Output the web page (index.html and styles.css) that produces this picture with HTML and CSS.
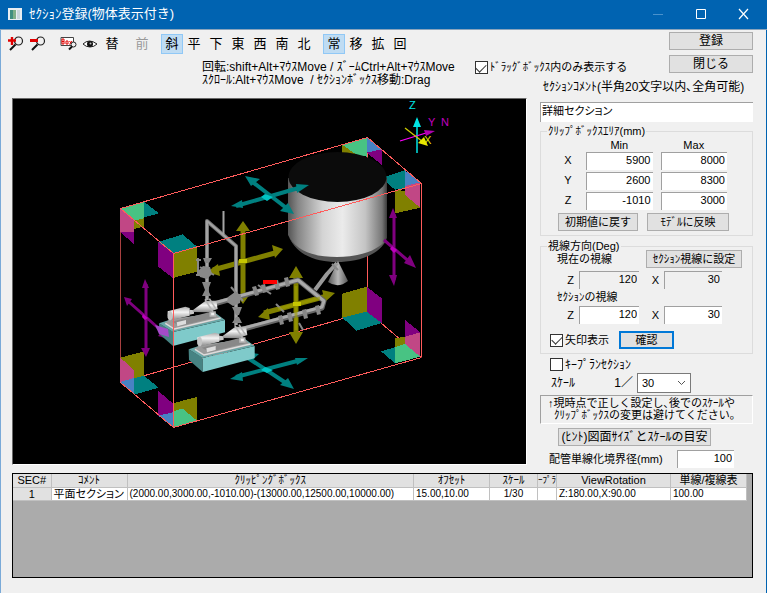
FILE: index.html
```html
<!DOCTYPE html>
<html lang="ja">
<head>
<meta charset="utf-8">
<title>ｾｸｼｮﾝ登録(物体表示付き)</title>
<link rel="stylesheet" href="styles.css">
</head>
<body>
<div class="window">
  <header class="titlebar">
    <svg class="app-icon" width="14" height="12" viewBox="0 0 14 12"><rect width="14" height="12" fill="#e8eef2"/><rect x="2" y="2" width="6" height="9" fill="#3f8f80"/><rect x="5" y="2" width="3" height="9" fill="#7fb08a"/><rect x="9" y="2" width="3" height="9" fill="#c9d6dc"/></svg>
    <h1>ｾｸｼｮﾝ登録(物体表示付き)</h1>
    <div class="window-controls">
      <button type="button" aria-label="最小化" disabled><svg width="12" height="12" viewBox="0 0 12 12"><path d="M1 6.500h10" stroke="#4a92cc"/></svg></button>
      <button type="button" aria-label="最大化"><svg width="12" height="12" viewBox="0 0 12 12"><path d="M1.500 1.500h9v9h-9z" fill="none" stroke="#fff"/></svg></button>
      <button type="button" aria-label="閉じる"><svg width="12" height="12" viewBox="0 0 12 12"><path d="M1 1l9 10M10 1L1 11" stroke="#fff" stroke-width="1.200"/></svg></button>
    </div>
  </header>

  <main class="content">
    <nav class="toolbar">
      <div class="tools">
        <button type="button" aria-label="拡大"><svg width="16" height="16" viewBox="0 0 16 16"><circle cx="10.500" cy="5" r="4" fill="none" stroke="#222" stroke-width="1.200"/><path d="M7.500 8.500L2 14" stroke="#111" stroke-width="2"/><path d="M0 4.500h8M4 1v8" stroke="#e00000" stroke-width="2.400"/></svg></button>
        <button type="button" aria-label="縮小"><svg width="16" height="16" viewBox="0 0 16 16"><circle cx="10.500" cy="5" r="4" fill="none" stroke="#222" stroke-width="1.200"/><path d="M7.500 8.500L2 14" stroke="#111" stroke-width="2"/><path d="M0 4.500h8" stroke="#e00000" stroke-width="3"/></svg></button>
      </div>
      <div class="tools">
        <button type="button" aria-label="範囲拡大"><svg width="17" height="16" viewBox="0 0 17 16"><path d="M1 1.500h12.500v8H1z" fill="#fff" stroke="#444"/><path d="M2 3v5M2 3h2v5H2M2 5.500h2M6 5h2v3H6zM9.500 5l2.500 3.500M12 5L9.500 8.500" fill="none" stroke="#e00000"/><circle cx="13.500" cy="8.500" r="2.500" fill="#f0f0f0" stroke="#222"/><path d="M12 10.500L9 13.500" stroke="#111" stroke-width="2"/></svg></button>
        <button type="button" aria-label="表示"><svg width="16" height="12" viewBox="0 0 16 12"><path d="M1 6q3-3 6.500-3T15 6q-3 3-7 3T1 6z" fill="#fff" stroke="#222"/><circle cx="8" cy="6" r="3" fill="#111"/><circle cx="8.500" cy="5.500" r="1" fill="#bbb"/></svg></button>
        <button type="button">替</button>
      </div>
      <div class="tools"><button type="button" disabled>前</button></div>
      <div class="tools">
        <button type="button" class="active">斜</button><button type="button">平</button><button type="button">下</button><button type="button">東</button><button type="button">西</button><button type="button">南</button><button type="button">北</button>
      </div>
      <div class="tools">
        <button type="button" class="active">常</button><button type="button">移</button><button type="button">拡</button><button type="button">回</button>
      </div>
    </nav>

    <div class="hints">
      <p>回転:shift+Alt+ﾏｳｽMove / ｽﾞｰﾑCtrl+Alt+ﾏｳｽMove<br>ｽｸﾛｰﾙ:Alt+ﾏｳｽMove&nbsp; / ｾｸｼｮﾝﾎﾞｯｸｽ移動:Drag</p>
      <label class="check"><input type="checkbox" checked>ﾄﾞﾗｯｸﾞﾎﾞｯｸｽ内のみ表示する</label>
    </div>

    <div class="commands">
      <button type="button" class="btn">登録</button>
      <button type="button" class="btn">閉じる</button>
    </div>

    <div class="viewport">
      <svg viewBox="13 99 513 365" role="img" aria-label="3Dビュー">
        <defs>
          <linearGradient id="tank"><stop offset="0" stop-color="#555"/><stop offset=".1" stop-color="#858585"/><stop offset=".35" stop-color="#d4d4d4"/><stop offset=".55" stop-color="#ebebeb"/><stop offset=".78" stop-color="#c4c4c4"/><stop offset=".95" stop-color="#777"/><stop offset="1" stop-color="#3b3b3b"/></linearGradient>
          <linearGradient id="tube" x2="0" y2="1"><stop offset="0" stop-color="#aaa"/><stop offset=".4" stop-color="#f4f4f4"/><stop offset="1" stop-color="#888"/></linearGradient>
          <linearGradient id="cone"><stop offset="0" stop-color="#555"/><stop offset=".5" stop-color="#b8b8b8"/><stop offset="1" stop-color="#555"/></linearGradient>
          <g id="pump">
            <path d="M177 160L219 185V228L178 192z" fill="#478383"/>
            <path d="M219 186L375 150V187L219 228z" fill="#7fcaca"/>
            <path d="M177 160L205 151L345 128L375 150L219 186z" fill="#67a8a8"/>
            <path d="M193 160L210 148L345 130L363 147L223 181z" fill="#9b9b9b"/>
            <path d="M196 160L223 177L362 144" fill="none" stroke="#ddd" stroke-width="4"/>
            <path d="M216 155L330 126L348 142L240 168z" fill="#888"/>
            <path d="M230 157L258 150V162L232 169z" fill="#ddd"/>
            <path d="M203 124L256 110L269 114V137L213 151L203 144z" fill="url(#tube)"/>
            <ellipse cx="210" cy="137" rx="7" ry="14" fill="#c4c4c4"/>
            <path d="M268 119l14 2v10l-14 3z" fill="#c8c8c8"/>
            <path d="M280 119L317 92L349 92L353 117L325 127L280 126z" fill="url(#tube)"/>
            <path d="M315 88L338 124M328 86L347 116M331 126h14v12h-14z" fill="#eee" stroke="#b5b5b5" stroke-width="5"/>
          </g>
        </defs>
        <rect x="13" y="99" width="513" height="365" fill="#000"/>

        <g transform="translate(.5 .5)" fill="none">
          <path d="M120 208V382" stroke="#a84040"/>
          <path d="M367 137V311" stroke="#ff5b5b"/>
          <path d="M120 382L367 311L421 357" stroke="#ff5b5b" shape-rendering="crispEdges"/>
        </g>

        <!-- upper left corners -->
        <g transform="translate(100 130) scale(.33333)" shape-rendering="crispEdges">
          <path d="M132 215L177 250L132 262z" fill="#008080"/>
          <path d="M61 235L132 215V265L102 272z" fill="#48c383"/>
          <path d="M61 235L102 272V305H61z" fill="#c14785"/>
          <path d="M61 305H102V344z" fill="#800080"/>
          <path d="M102 272L132 265V290L102 297z" fill="#808000"/>
          <path d="M175 336L248 313L291 350L218 370z" fill="#008080"/>
          <path d="M175 336L218 370V444L175 410z" fill="#800080"/>
          <path d="M218 370L291 350V425L218 444z" fill="#808000"/>
        </g>
        <!-- right corners -->
        <g transform="translate(260 130) scale(.33333)" shape-rendering="crispEdges">
          <path d="M247 45L320 75L290 78L247 68z" fill="#808000"/>
          <path d="M248 45L320 22V80L290 75z" fill="#48c383"/>
          <path d="M320 22L365 58L320 70z" fill="#4782c4"/>
          <path d="M320 68L365 58V104z" fill="#800080"/>
          <path d="M363 144L435 121V174L405 179z" fill="#008080"/>
          <path d="M435 121L481 157L435 168z" fill="#4782c4"/>
          <path d="M405 179L481 190V233L405 250z" fill="#808000"/>
          <path d="M435 168L481 157V233L435 195z" fill="#c14785"/>
        </g>
        <!-- lower left corners -->
        <g transform="translate(100 270) scale(.33333)" shape-rendering="crispEdges">
          <path d="M61 263L132 244V318L102 325z" fill="#808000"/>
          <path d="M61 263L102 300V325L61 336z" fill="#c14785"/>
          <path d="M61 336L102 324V374z" fill="#4782c4"/>
          <path d="M102 325L132 317L176 353L102 374z" fill="#008080"/>
          <path d="M175 363L218 400V431L175 437z" fill="#800080"/>
          <path d="M218 400L291 381V452L218 471z" fill="#808000"/>
          <path d="M175 437L218 427V472z" fill="#4782c4"/>
          <path d="M218 424L248 416L291 452L218 472z" fill="#48c383"/>
        </g>
        <g transform="translate(260 270) scale(.33333)" shape-rendering="crispEdges">
          <path d="M247 71L320 50V125L247 143z" fill="#808000"/>
          <path d="M320 50L365 85V159L320 125z" fill="#800080"/>
          <path d="M247 143L320 125L365 159L290 182z" fill="#008080"/>
          <path d="M435 150L481 187V260L435 222z" fill="#c14785"/>
          <path d="M435 150L481 187L435 200z" fill="#800080"/>
          <path d="M405 205L435 200V224L405 234z" fill="#808000"/>
          <path d="M363 244L405 232V280z" fill="#008080"/>
          <path d="M405 232L435 222L481 260L405 280z" fill="#48c383"/>
        </g>

        <!-- tank -->
        <path d="M288 178V235C298 256 319 261 337 261S378 256 387 238V178z" fill="url(#tank)"/>
        <path d="M289 237C298 257 319 262 337 262S378 257 387 239C377 252 357 257 337 257S299 253 289 237z" fill="#555"/>
        <ellipse cx="337.500" cy="177" rx="49" ry="25" fill="#0b0b0b"/>
        <path d="M338 261L348 281Q338 289 328 282z" fill="url(#cone)"/>

        <!-- drag arrows -->
        <g fill="none" stroke="#008080" stroke-width="4">
          <path d="M250 180L289 210M236 206L302 187M248 358L289 385M236 377L301 360"/>
        </g>
        <g fill="#008080">
          <path d="M245 176l15 3-9 7zM231 206l11-6 1 8zM309 185l-12 8-1-9zM294 214l-14-3 8-8zM246 352l13 2-8 7zM230 379l12-7 1 9zM308 358l-11 7-2-7zM294 389l-14-4 8-7z"/>
        </g>
        <g fill="none" stroke="#808000" stroke-width="5">
          <path d="M243 229V299M213 270L275 253M296 275V336M264 313L327 296"/>
        </g>
        <g fill="#808000">
          <path d="M243 221l7 10h-14zM243 304l-7-10h14zM207 272l11-8 2 12zM283 249l-8 9-3-13zM296 266l7 12h-14zM296 344l-7-12h14zM258 317l10-9 2 12zM335 293l-10 9-3-12z"/>
        </g>
        <g fill="none" stroke="#800080" stroke-width="3">
          <path d="M146 284V351M129 302L165 334M394 214V280M384 240L412 264"/>
        </g>
        <g fill="#800080">
          <path d="M145 279l4 9h-7zM146 357l-5-9h9zM124 297l8 2-5 7zM168 339l-10-3 6-7zM393 208l4 10h-8zM394 286l-5-11h8zM416 268l-12-5 6-8z"/>
        </g>

        <!-- piping -->
        <g fill="none" stroke-linejoin="round">
          <path d="M207 300V221L236 246V325" stroke="#777" stroke-width="4"/>
          <path d="M207 300V221L236 246V325M223.500 211V234" stroke="#a4a4a4" stroke-width="2"/>
          <path d="M214 304L298 280L324 301L322 308L240 330" stroke="#666" stroke-width="5"/>
          <path d="M214 303L298 280L324 301L322 307L240 329" stroke="#aaa" stroke-width="3"/>
          <path d="M315 290L327 274L337 263" stroke="#999" stroke-width="4"/>
          <path d="M198 258v18M196 260h5M196 275h5M200 267l14 8M231 287l12 14M258 285l13 9M276 304l8 8M299 323l4 7M332 264l6 6" stroke="#888" stroke-width="2"/>
        </g>
        <g fill="#888">
          <path d="M198 271l5-5 7 1 2 7-5 5-7-2zM228 297l7-5 6 3-1 8-7 3-6-4zM203 258l9 0-3 5h-4zM202 282l9 0-3 8h-3zM202 296l9 0-3-6h-3zM232 307l10 0-3 8h-3zM232 323l10 0-3-6h-3z"/>
          <path d="M252 287l4-1 3 9-4 1zM261 285l4-1 2 8-4 1zM274 281l4-1 2 9-4 1zM284 278l4-1 2 9-4 1zM278 316l4-1 2 9-4 1zM287 313l4-1 2 9-4 1zM302 310l4-1 2 9-4 1zM315 306l4-1 2 9-4 1z"/>
        </g>
        <path d="M263 280h14v4h-14z" fill="#f00"/>
        <g transform="translate(100 270) scale(.33333)">
          <use href="#pump"/>
          <use href="#pump" x="89" y="78"/>
        </g>
        <path d="M296 286V330M278 309L320 298" stroke="#a0a000" stroke-width="3" opacity=".6"/>
        <path d="M155 325l13 4 1 8-10-3z" fill="#a44bc8"/>
        <path d="M265 194l8 3-6 4-6-4zM265 367l8 3-6 3-6-3z" fill="#00c4c4"/>
        <path d="M239 259h8v4h-8zM293 302h8v4h-8z" fill="#c6c600"/>
        <path d="M392 246l5 4-3 3-4-4zM143 314l5 4-3 2-3-3z" fill="#bd00bd"/>

        <!-- front edges -->
        <g transform="translate(.5 .5)" fill="none" stroke="#ff5b5b">
          <path d="M120 208L367 137L421 183L173 253zM120 382L173 427L421 357" shape-rendering="crispEdges"/>
          <path d="M173 253V427M421 183V357"/>
        </g>

        <!-- axes -->
        <g fill="none">
          <path d="M417 119V153" stroke="#00e5e5" stroke-width="1.500"/><path d="M400 141L426 133" stroke="#f0f" stroke-width="1.300"/><path d="M405 128L423 142" stroke="#cc0" stroke-width="1.300"/>
        </g>
        <path d="M417 117l4 10h-8z" fill="#00e5e5"/><path d="M435 131l-11-1 2 6z" fill="#b000b0"/><path d="M428 146l-10-3 6-6z" fill="#e8e800"/>
        <g class="axis-labels"><text x="409" y="109" fill="#00e5e5">Z</text><text x="428" y="126" fill="#c000c0">Y</text><text x="441" y="126" fill="#c000c0">N</text><text x="424" y="144" fill="#e8e800">X</text></g>
      </svg>
    </div>

    <form class="panel">
      <label class="comment-label" for="comment">ｾｸｼｮﾝｺﾒﾝﾄ(半角20文字以内､全角可能)</label>
      <input id="comment" class="field comment" value="詳細セクション">

      <fieldset class="area">
        <legend>ｸﾘｯﾌﾟﾎﾞｯｸｽｴﾘｱ(mm)</legend>
        <div class="area-grid">
          <span></span><span>Min</span><span>Max</span>
          <label for="xmin">X</label><input id="xmin" class="field num" value="5900"><input aria-label="X Max" class="field num" value="8000">
          <label for="ymin">Y</label><input id="ymin" class="field num" value="2600"><input aria-label="Y Max" class="field num" value="8300">
          <label for="zmin">Z</label><input id="zmin" class="field num" value="-1010"><input aria-label="Z Max" class="field num" value="3000">
        </div>
        <div class="area-actions">
          <button type="button" class="btn">初期値に戻す</button>
          <button type="button" class="btn">ﾓﾃﾞﾙに反映</button>
        </div>
      </fieldset>

      <fieldset class="view">
        <legend>視線方向(Deg)</legend>
        <div class="view-head"><span>現在の視線</span><button type="button" class="btn">ｾｸｼｮﾝ視線に設定</button></div>
        <div class="angles">
          <label for="cz">Z</label><input id="cz" class="field num" value="120" readonly><label for="cx">X</label><input id="cx" class="field num" value="30" readonly>
        </div>
        <div class="view-sub">ｾｸｼｮﾝの視線</div>
        <div class="angles">
          <label for="sz">Z</label><input id="sz" class="field num" value="120"><label for="sx">X</label><input id="sx" class="field num" value="30">
        </div>
        <div class="view-foot"><label class="check"><input type="checkbox" checked>矢印表示</label><button type="button" class="btn default">確認</button></div>
      </fieldset>

      <label class="check keyplan"><input type="checkbox">ｷｰﾌﾟﾗﾝｾｸｼｮﾝ</label>
      <div class="scale"><label for="scale">ｽｹｰﾙ</label><span>1／</span><select id="scale"><option>30</option></select></div>
      <p class="note">↑現時点で正しく設定し､後でのｽｹｰﾙや<br>&nbsp; ｸﾘｯﾌﾟﾎﾞｯｸｽの変更は避けてください｡</p>
      <button type="button" class="btn hint-btn">(ﾋﾝﾄ)図面ｻｲｽﾞとｽｹｰﾙの目安</button>
      <div class="pipe"><label for="pipe">配管単線化境界径(mm)</label><input id="pipe" class="field num" value="100"></div>
    </form>
  </main>

  <div class="grid">
    <table>
      <colgroup><col class="c-no"><col class="c-comment"><col class="c-box"><col class="c-offset"><col class="c-scale"><col class="c-key"><col class="c-rot"><col class="c-line"></colgroup>
      <thead><tr><th>SEC#</th><th>ｺﾒﾝﾄ</th><th>ｸﾘｯﾋﾟﾝｸﾞﾎﾞｯｸｽ</th><th>ｵﾌｾｯﾄ</th><th>ｽｹｰﾙ</th><th class="cut">ｰﾌﾟﾗ</th><th>ViewRotation</th><th>単線/複線表</th></tr></thead>
      <tbody><tr><th>1</th><td class="kana">平面セクション</td><td>(2000.00,3000.00,-1010.00)-(13000.00,12500.00,10000.00)</td><td>15.00,10.00</td><td class="center">1/30</td><td></td><td>Z:180.00,X:90.00</td><td>100.00</td></tr></tbody>
    </table>
  </div>
</div>
</body>
</html>
```
FILE: styles.css
```css
* { box-sizing: border-box; }

body {
  margin: 0;
  background: #f0f0f0;
  color: #000;
  font: 11px/12px "Liberation Sans", "Noto Sans CJK JP", sans-serif;
}

button, input, select { font: inherit; color: inherit; margin: 0; padding: 0; border-radius: 0; }
p, h1 { margin: 0; }

.window {
  min-height: 100vh;
  border-left: 1px solid #7aaad8;
  border-right: 1px solid #0063b1;
}

.titlebar {
  display: flex;
  align-items: center;
  gap: 7px;
  height: 30px;
  margin: 0 -1px;
  padding: 0 2px 2px 8px;
  background: #0063b1;
  color: #fff;
  border-bottom: 1px solid #8aa4bc;
}
.titlebar h1 { flex: 1; font-size: 13px; font-weight: 400; line-height: 16px; }
.window-controls { display: flex; }
.window-controls button { display: grid; place-items: center; width: 43px; height: 26px; background: none; border: 0; }

.content {
  display: grid;
  grid-template-columns: minmax(0, 1fr) 142px 84px;
  grid-template-rows: 31px 20px 17px auto;
  padding: 0 13px 0 11px;
}

.toolbar { grid-area: 1 / 1 / 2 / 2; display: flex; gap: 8px; padding-top: 4px; margin-left: -7px; }
.tools { display: flex; }
.tools button {
  display: grid;
  place-items: center;
  width: 22px;
  height: 20px;
  background: none;
  border: 1px solid transparent;
  font-size: 13px;
}
.tools button:disabled { color: #999; }
.tools .active { background: #bfdcf3; border-color: #90c8f6; }

.hints {
  grid-area: 2 / 1 / 4 / 4;
  display: flex;
  align-items: flex-start;
  gap: 20px;
  padding-left: 190px;
  font-size: 12px;
  line-height: 13px;
  white-space: nowrap;
}
.hints .check { font-size: 11px; }

.check { display: flex; align-items: center; gap: 2px; white-space: nowrap; }
.check input {
  appearance: none;
  display: grid;
  place-items: center;
  width: 13px;
  height: 13px;
  background: #fff;
  border: 1px solid #333;
}
.check input:checked::after {
  content: "";
  width: 9px;
  height: 5px;
  border: solid #333;
  border-width: 0 0 1px 1px;
  transform: translateY(-1px) rotate(-45deg);
}

.btn {
  height: 18px;
  background: #e1e1e1;
  border: 1px solid #adadad;
  outline: 0;
  white-space: nowrap;
}
.btn.default { border: 2px solid #0078d7; }

.commands { grid-area: 1 / 3 / 4 / 4; display: flex; flex-direction: column; gap: 5px; padding-top: 2px; z-index: 1; }
.commands .btn { font-size: 12px; }

.viewport {
  grid-area: 4 / 1 / 5 / 2;
  align-self: start;
  background: #000;
  border: 1px solid #696969;
  border-right-color: #fff;
  border-bottom-color: #fff;
}
.viewport svg { display: block; width: 100%; }
.axis-labels { font: 11px "Liberation Sans", sans-serif; }

.panel {
  grid-area: 3 / 2 / 5 / 4;
  display: flex;
  flex-direction: column;
  padding-left: 13px;
}

.field {
  min-width: 0;
  height: 18px;
  padding: 0 2px 3px;
  background: #fff;
  border: 0 solid #a0a0a0;
  border-width: 1px 0 0 1px;
  font-feature-settings: "palt";
}
.field.num { text-align: right; }
.field[readonly] { background: #f0f0f0; }

.comment-label { padding-left: 3px; font-size: 12px; line-height: 13px; white-space: nowrap; }
.comment { height: 20px; margin-top: 8px; padding: 0 1px 5px; }

fieldset { margin: 0; min-width: 0; border: 1px solid #dcdcdc; }
legend { padding: 0 1px; }

.area { margin-top: 3px; padding: 3px 25px 4px 17px; }
.area legend { margin-left: -11px; }
.area-grid {
  display: grid;
  grid-template-columns: 20px 1fr 1fr;
  column-gap: 8px;
  row-gap: 2px;
  text-align: center;
}
.area-grid span { height: 10px; line-height: 10px; }
.area-grid label { line-height: 16px; }
.area-actions { display: grid; grid-template-columns: 80px 82px; gap: 9px; margin-top: 3px; }

.view { margin-top: 4px; padding: 0 10px 4px 9px; }
.view legend { margin-left: -3px; }
.view-head { display: flex; align-items: center; justify-content: space-between; margin-top: -2px; padding-left: 7px; }
.view-head .btn { width: 96px; }
.view-sub { padding-left: 7px; margin-top: 2px; }
.angles { display: grid; grid-template-columns: 27px 60px 21px 58px; column-gap: 2px; margin-top: 3px; text-align: right; }
.angles label { padding-right: 3px; line-height: 18px; }
.view-foot { display: flex; align-items: center; gap: 10px; margin-top: 7px; }
.view-foot .btn { width: 55px; }

.keyplan { margin: 4px 0 0 10px; font-size: 12px; }
.scale { display: flex; align-items: center; margin: 2px 0 0 11px; font-size: 12px; }
.scale span { margin: 0 4px 0 auto; }
.scale select {
  appearance: none;
  width: 54px;
  height: 20px;
  margin-right: 62px;
  padding-left: 4px;
  border: 1px solid #7a7a7a;
  font-size: 11px;
  background: #fff url("data:image/svg+xml,%3Csvg xmlns='http://www.w3.org/2000/svg' width='9' height='6'%3E%3Cpath d='M1 1l3.500 3.500L8 1' fill='none' stroke='%23555'/%3E%3C/svg%3E") no-repeat right 4px center;
}
.note {
  margin-top: 2px;
  padding: 1px 7px 2px;
  border: 1px solid #a0a0a0;
  border-right-color: #fff;
  border-bottom-color: #fff;
  white-space: nowrap;
}
.hint-btn { align-self: flex-start; width: 153px; margin: 4px 0 0 18px; font-size: 12px; }
.pipe { display: flex; align-items: center; gap: 12px; margin: 4px 19px 0 9px; }
.pipe label { flex: 1; white-space: nowrap; }
.pipe .field { width: 57px; }

.grid {
  height: 105px;
  margin: 5px 13px 0 11px;
  background: #ababab;
  border: 1px solid #000;
}
table { width: calc(100% - 5px); border-collapse: collapse; table-layout: fixed; }
th, td {
  height: 13px;
  padding: 0 2px;
  border: solid #c0c0c0;
  border-width: 0 1px 1px 0;
  background: #fff;
  font-weight: 400;
  text-align: left;
  line-height: 12px;
  white-space: nowrap;
  overflow: hidden;
}
th { background: #e1e1e1; text-align: center; }
td { font-size: 10px; }
td.kana { font-size: 11px; font-feature-settings: "palt"; }
td.center { text-align: center; }
th.cut { padding: 0; font-size: 9px; }
.c-no { width: 38px; }
.c-comment { width: 76px; }
.c-offset { width: 76px; }
.c-scale { width: 48px; }
.c-key { width: 19px; }
.c-rot { width: 114px; }
.c-line { width: 76px; }
```
